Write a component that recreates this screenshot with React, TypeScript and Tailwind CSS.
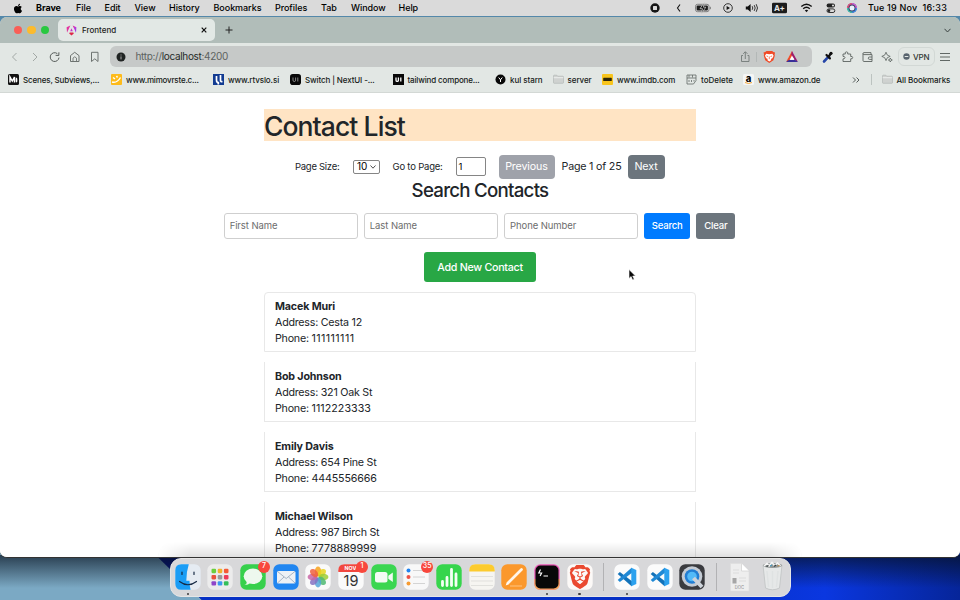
import React from "react";
import { FaApple } from "react-icons/fa";
import { SiBrave } from "react-icons/si";

const menus = [
  { label: "Brave", cls: "w-10 font-bold" },
  { label: "File", cls: "w-[28.5px] font-medium" },
  { label: "Edit", cls: "w-[30px] font-medium" },
  { label: "View", cls: "w-[34.5px] font-medium" },
  { label: "History", cls: "w-[44.5px] font-medium" },
  { label: "Bookmarks", cls: "w-[61.5px] font-medium" },
  { label: "Profiles", cls: "w-[46px] font-medium" },
  { label: "Tab", cls: "w-[30px] font-medium" },
  { label: "Window", cls: "w-[47.5px] font-medium" },
  { label: "Help", cls: "w-8 font-medium" },
];

const contacts = [
  { name: "Macek Muri", address: "Cesta 12", phone: "111111111", digits: "tracking-[0.42px]" },
  { name: "Bob Johnson", address: "321 Oak St", phone: "1112223333", digits: "tracking-[0.05px]" },
  { name: "Emily Davis", address: "654 Pine St", phone: "4445556666", digits: "tracking-[-0.15px]" },
  { name: "Michael Wilson", address: "987 Birch St", phone: "7778889999", digits: "tracking-[0px]" },
];

function MenuBar() {
  return (
    <div className="flex h-4 items-center bg-[#dadada] text-[9px] leading-4 tracking-[-0.05px] text-black">
      <div className="flex w-9 shrink-0 pl-[13px]">
        <FaApple className="h-[11px] w-[10px]" />
      </div>
      {menus.map((m) => (
        <span key={m.label} className={`shrink-0 whitespace-nowrap ${m.cls}`}>{m.label}</span>
      ))}
      <svg className="ml-[212px] h-4 w-[220px] shrink-0" viewBox="643 0 220 16" fill="none">
        <circle cx="655" cy="8" r="4.7" fill="#151515" />
        <rect x="653" y="6" width="4" height="4" rx="0.6" fill="#dadada" />
        <path d="M680 4.5 677.5 8l2.5 3.5" stroke="#111" strokeWidth="1.1" />
        <rect x="695.5" y="4.3" width="13.5" height="7.4" rx="2" stroke="#777" strokeWidth="0.9" />
        <rect x="696.6" y="5.4" width="11.300" height="5.200" rx="1" fill="#1c1c1c" />
        <path d="M704.300 2.500 700 8.700h2.500l-1 4.800 4.300-6.300h-2.500z" fill="#111" stroke="#dadada" strokeWidth="0.7" />
        <path d="M710.3 6.8v2.4" stroke="#777" />
        <circle cx="728" cy="8" r="4.3" stroke="#222" strokeWidth="0.9" />
        <path d="M726.6 5.9v4.2l3.4-2.1z" fill="#111" />
        <path d="M745.8 6.4h2l2.8-2.4v8l-2.8-2.4h-2z" fill="#111" />
        <path d="M752.2 6.2q1.2 1.8 0 3.6M754.2 5.1q2 2.9 0 5.8M756.2 4.2q2.6 3.8 0 7.6" stroke="#222" strokeWidth="0.9" />
        <rect x="772" y="2.7" width="15" height="10.6" rx="1.4" fill="#1c1c1c" />
        <path d="M801.3 6.6q5.2-4.6 10.4 0M803.2 8.7q3.3-2.9 6.6 0" stroke="#111" strokeWidth="1.4" />
        <path d="M806.5 12.2 804.8 10.3q1.7-1.2 3.4 0z" fill="#111" />
        <rect x="826.6" y="3.6" width="8.4" height="3.8" rx="1.9" fill="#222" />
        <circle cx="833" cy="5.5" r="1.1" fill="#dadada" />
        <rect x="827" y="8.9" width="7.8" height="3.6" rx="1.8" stroke="#222" strokeWidth="0.9" />
        <circle cx="828.9" cy="10.7" r="1.4" fill="#222" />
        <circle cx="852" cy="8" r="4.8" fill="#3d3f66" />
        <path d="M847.7 8a4.3 4.3 0 0 1 4.3-4.3" stroke="#e0507e" strokeWidth="1.6" />
        <path d="M852 3.7A4.3 4.3 0 0 1 856.3 8" stroke="#c95fd0" strokeWidth="1.6" />
        <path d="M856.3 8a4.3 4.3 0 0 1-4.3 4.3" stroke="#3c8de8" strokeWidth="1.6" />
        <path d="M852 12.3A4.3 4.3 0 0 1 847.7 8" stroke="#35bfae" strokeWidth="1.6" />
        <circle cx="852" cy="8" r="2.5" fill="#e9f2fb" />
        <text x="779.4" y="11" fontSize="8" fontWeight="700" fill="#e8e8e8" textAnchor="middle">A+</text>
      </svg>
      <span className="ml-[5.5px] shrink-0 whitespace-pre font-medium tracking-[0.2px]">Tue 19 Nov  16:33</span>
    </div>
  );
}

function TabStrip() {
  return (
    <div className="flex h-[26px] shrink-0 items-center bg-[#b1bdb9]">
      <div className="ml-[14px] flex w-[44px] shrink-0 gap-[5px]">
        <i className="size-[8.4px] rounded-full bg-[#f95f57]" />
        <i className="size-[8.4px] rounded-full bg-[#fcbb2d]" />
        <i className="size-[8.4px] rounded-full bg-[#28c840]" />
      </div>
      <div className="flex h-[22px] w-[157px] shrink-0 items-center rounded-[5px] bg-[#e2e8e5] pl-2">
        <svg className="h-[11px] w-[11px]" viewBox="0 0 22 22">
          <defs>
            <linearGradient id="ng" x1="0" y1="0" x2="1" y2="1">
              <stop offset="0" stopColor="#e32d7a" />
              <stop offset="0.5" stopColor="#c038e0" />
              <stop offset="1" stopColor="#7a3cf0" />
            </linearGradient>
          </defs>
          <path d="M13.3 1 20.8 4.6 20 15.6z" fill="url(#ng)" />
          <path d="M8.700 1 1.200 4.600 2 15.600z" fill="#e235a0" />
          <path d="M15.600 17.200 11 20.900 6.400 17.200 7.400 14.800h7.200z" fill="#dd2748" />
          <path d="M11 6.400 13.600 12.500H8.400z" fill="#c832c8" />
        </svg>
        <span className="ml-1 w-[119.5px] pl-[1px] text-[8px] font-medium text-[#1e2321]">Frontend</span>
        <svg className="h-[6px] w-[6px]" viewBox="0 0 6 6"><path d="M.7.7l4.6 4.600M5.300.7.7 5.300" stroke="#111" strokeWidth="1.200" /></svg>
      </div>
      <svg className="ml-[9.500px] h-[8px] w-[8px]" viewBox="0 0 8 8"><path d="M4 .5v7M.5 4h7" stroke="#222" strokeWidth="1" /></svg>
      <svg className="mr-[9px] ml-auto h-[5px] w-[7px]" viewBox="0 0 7 5"><path d="M.5.800 3.500 4 6.500.800" fill="none" stroke="#3c4442" strokeWidth="1" /></svg>
    </div>
  );
}

function AddressBar() {
  return (
    <div className="mt-[2.500px] flex h-[22px] shrink-0 items-center">
      <svg className="h-[22px] w-[110px] shrink-0" viewBox="0 46 110 22" fill="none">
        <path d="m16.500 53-4 4 4 4M33 53l4 4-4 4" stroke="#a2a8a5" />
        <path d="M57.300 53.600A4.400 4.400 0 1 0 59 57.600" stroke="#575d5a" />
        <path d="m58.900 52.300-.1 3.200-3.200-.2" stroke="#575d5a" />
        <path d="M70.500 55.600 74.700 52.300 79 55.600V61.500h-8.500z" stroke="#6d7370" strokeLinejoin="round" />
        <path d="M73 61.300v-3.200q1.700-2.600 3.500 0v3.200" stroke="#6d7370" strokeWidth="0.9" />
        <path d="M91.500 52.300h6.500v9.200l-3.200-2.700-3.300 2.700z" stroke="#6d7370" strokeLinejoin="round" />
      </svg>
      <div className="flex h-[21px] w-[702px] shrink-0 items-center rounded-md bg-[#c6c9c8]">
        <svg className="ml-[6px] h-[10px] w-[10px]" viewBox="0 0 10 10"><circle cx="5" cy="5" r="4.500" fill="#202423" /><path d="M5 2.500v1M5 4.400v3" stroke="#aaa" /></svg>
        <span className="ml-[9.500px] text-[10px] tracking-[-0.320px] text-[#5d6360]">http://<span className="text-[#262b29]">localhost</span>:4200</span>
        <svg className="mr-[10px] ml-auto h-[20px] w-[66px]" viewBox="736 47 66 20" fill="none">
          <path d="M743 55.500h-1.500v6h7.500v-6h-1.500M745.300 59v-7M743.200 53.800l2.100-2.100 2.100 2.100" stroke="#737977" strokeWidth="0.9" />
          <path d="M756.500 52v10" stroke="#afb4b2" strokeWidth="0.800" />
          <path d="M766.500 51h5.600l1.300 1.100 1.700.4-.5 2 .2 1.300-1.400 4.400-4.100 2.900-4.100-2.900-1.400-4.400.2-1.300-.5-2 1.700-.4z" fill="#f04a26" />
          <path d="M766.200 53.800l3.100.5 3.100-.5 1.200 1.900-1.200 2.500-1.700.8.700 1-2.100 1.500-2.100-1.500.7-1-1.700-.8-1.200-2.500z" fill="#fff" />
          <path d="M766.500 56l1.600.5M772.100 56l-1.600.5M769.300 56.500v2.700" stroke="#f04a26" strokeWidth="0.700" />
          <path d="M792 51.500 797.800 62H786.200z" fill="#fff" />
          <path d="M792 51 793.500 56.500 789.300 60.200 786 62z" fill="#f04c28" />
          <path d="M792 51 798 62 794.500 60 791.200 54.500z" fill="#9b1d6e" />
          <path d="M786 62h12l-3-2.300h-6z" fill="#392f98" />
          <path d="M792 55.500 794.300 59.700h-4.600z" fill="#fff" />
        </svg>
      </div>
      <svg className="h-[22px] w-[86px] shrink-0" viewBox="812 46 86 22" fill="none">
        <path d="M824 61.500 829 56.200" stroke="#2546a8" strokeWidth="2.600" strokeLinecap="round" />
        <path d="M826.500 55l3.400 3.400M829 56l1.800-2.200" stroke="#111" strokeWidth="2.200" strokeLinecap="round" />
        <circle cx="831" cy="53.300" r="1.600" fill="#111" />
        <path d="M843 54h2.300q-.7-2.100 1.200-2.100t1.200 2.100h3v2.500q2-.4 2 1.100t-2 1.200v2.700h-7.700v-2.600q2-.1 2-1.300t-2-1.200z" stroke="#5c6360" strokeWidth="0.9" strokeLinejoin="round" />
        <path d="M863 53.600q0-1 1-1h7v2M863 53.600v6.900q0 1 1 1h8v-6.900h-8q-1 0-1-1zM872 57h-2.500q-1.200 0-1.200 1.200t1.200 1.200h2.500" stroke="#5c6360" strokeWidth="0.9" />
        <path d="m886 52.200 1.300 2.900 2.900 1.300-2.900 1.300-1.300 2.900-1.300-2.900-2.900-1.300 2.900-1.300zM890.300 58l.6 1.400 1.400.6-1.400.6-.6 1.400-.6-1.400-1.400-.6 1.400-.6z" stroke="#5c6360" strokeWidth="0.800" />
      </svg>
      <div className="flex h-[19px] w-[37px] shrink-0 items-center rounded-md border border-[#d2d8d5] pl-[4px] text-[8px] font-medium tracking-[-0.100px] text-[#333936]">
        <svg className="mr-[3px] h-[7px] w-[7px]" viewBox="0 0 7 7"><circle cx="3.500" cy="3.500" r="3.200" fill="#59656f" /><path d="M1.700 3.500h3.600" stroke="#e2e7e4" strokeWidth="1.100" /></svg>
        VPN
      </div>
      <svg className="ml-[5px] h-[10px] w-[10px]" viewBox="0 0 10 10"><path d="M0 1.500h10M0 5h10M0 8.500h10" stroke="#525956" strokeWidth="0.9" /></svg>
    </div>
  );
}

function Folder() {
  return (
    <svg className="h-[11px] w-[11px]" viewBox="0 0 11 11"><path d="M.5 2q0-.8.8-.8h2.500l1 1h4.900q.8 0 .8.800v5.500q0 .8-.8.800H1.300q-.8 0-.8-.8z" fill="#cfd2d0" stroke="#adb2b0" strokeWidth="0.600" /><path d="M.7 3.700h9.600" stroke="#eceeed" /></svg>
  );
}

function Bookmarks() {
  const items: { label: string; cls: string; icon: React.ReactNode }[] = [
    { label: "Scenes, Subviews,...", cls: "w-[103px] tracking-[-0.15px]", icon: <svg className="size-[11px]" viewBox="0 0 11 11"><rect width="11" height="11" rx="1.500" fill="#111" /><path d="M2 8.500V3l2.300 4L6.500 3v5.500" fill="none" stroke="#fff" strokeWidth="1.500" /><ellipse cx="8.500" cy="6" rx=".9" ry="2.500" fill="#fff" /></svg> },
    { label: "www.mimovrste.c...", cls: "w-[102px] tracking-[-0.2px]", icon: <svg className="size-[11px]" viewBox="0 0 11 11"><rect width="11" height="11" rx="1" fill="#fdbb1b" /><path d="M1 8q5 1.500 8.500-4.500M2 3.500l2 1.500M5.500 2l1 1.500" fill="none" stroke="#fff" strokeWidth="1.400" /></svg> },
    { label: "www.rtvslo.si", cls: "w-[77px] tracking-[-0.1px]", icon: <svg className="size-[11px]" viewBox="0 0 11 11"><rect width="11" height="11" fill="#123b91" /><path d="M3.500 2v4q0 2.500 1.800 2.500v2M7.500 1v5.500q0 1.500 2 1" fill="none" stroke="#fff" strokeWidth="1.700" /></svg> },
    { label: "Switch | NextUI -...", cls: "w-[102.5px] tracking-[-0.12px]", icon: <svg className="size-[11px]" viewBox="0 0 11 11"><rect width="11" height="11" rx="2.800" fill="#080808" /><path d="M3 3.500v2.700q0 1.300 1.300 1.300t1.300-1.300V3.500M7.800 3.500v4" fill="none" stroke="#bbb" strokeWidth=".7" /></svg> },
    { label: "tailwind compone...", cls: "w-[102.5px] tracking-[-0.15px]", icon: <svg className="size-[11px]" viewBox="0 0 11 11"><rect width="11" height="11" fill="#080808" /><path d="M3 3.500v2.700q0 1.200 1.200 1.200t1.200-1.200V3.500M7.800 3.500v4" fill="none" stroke="#fff" strokeWidth="1.300" /></svg> },
    { label: "kul starn", cls: "w-[57.500px] tracking-[-0.05px]", icon: <svg className="size-[11px]" viewBox="0 0 11 11"><circle cx="5.500" cy="5.500" r="5" fill="#080808" /><path d="M3.700 3.500l1.800 2.300 1.800-2.300M5.500 5.500v2.500" fill="none" stroke="#fff" strokeWidth="1" /></svg> },
    { label: "server", cls: "w-[49.500px] tracking-[-0.05px]", icon: <Folder /> },
    { label: "www.imdb.com", cls: "w-[84px] tracking-[-0.12px]", icon: <svg className="size-[11px]" viewBox="0 0 11 11"><rect width="11" height="11" rx="1" fill="#f8c51c" /><rect x="1.200" y="3.800" width="8.600" height="3.200" rx=".6" fill="#2c2508" /></svg> },
    { label: "toDelete", cls: "w-[57px]", icon: <svg className="size-[11px]" viewBox="0 0 11 11" fill="none" stroke="#626966" strokeWidth=".8"><path d="M1 1h9v5.500l-2.500 3.500H1zM1 4h9M3 1v2.500M6.500 1v2.500M3 6v2M5.500 6v2M8 6v1.500" /></svg> },
    { label: "www.amazon.de", cls: "w-[109px] tracking-[-0.12px]", icon: <svg className="size-[11px]" viewBox="0 0 11 11"><rect width="11" height="11" rx="1.500" fill="#f5f6f5" /><text x="5.500" y="7.600" textAnchor="middle" fontSize="9.500" fontWeight="800">a</text><path d="M2 8.500q3.500 2 7 0" fill="none" stroke="#f6a024" strokeWidth=".9" /></svg> },
  ];
  return (
    <div className="flex h-[24px] items-center text-[8px] font-medium text-[#161a18]">
      <div className="w-[8px] shrink-0" />
      {items.map((b) => (
        <div key={b.label} className={`flex shrink-0 items-center gap-[4px] whitespace-nowrap ${b.cls}`}>
          <span className="shrink-0">{b.icon}</span>
          {b.label}
        </div>
      ))}
      <svg className="h-[8px] w-[8px]" viewBox="0 0 8 8"><path d="M1 1.500 3.500 4 1 6.500M4.500 1.500 7 4 4.500 6.500" fill="none" stroke="#444b48" strokeWidth=".9" /></svg>
      <div className="ml-[11px] h-[11px] w-px bg-[#bcc3c0]" />
      <div className="ml-[9.500px] flex items-center gap-[4px] tracking-[-0.080px] whitespace-nowrap"><Folder />All Bookmarks</div>
    </div>
  );
}

function Field({ label }: { label: string }) {
  return (
    <div className="flex h-[26px] w-[134px] shrink-0 items-center rounded-[3px] border border-[#cfcfcf] pt-px pl-[5px] text-[9.500px] tracking-[-0.080px] text-[#6d6d6d]">{label}</div>
  );
}

function ContactsPage() {
  return (
    <div className="relative flex flex-1 flex-col overflow-hidden border-t border-[#d3d8d5] bg-white text-[#212529]">
      <div className="mx-auto mt-[16.500px] flex h-8 w-[432px] shrink-0 items-center bg-[#ffe4c4] pt-px">
        <h1 className="text-[26.500px] leading-8 font-medium tracking-[-0.920px]">Contact List</h1>
      </div>
      <div className="mt-[13px] ml-[295px] flex h-[25px] shrink-0 items-center whitespace-nowrap text-[9.500px]">
        <span className="w-[58px] pt-px tracking-[-0.280px]">Page Size:</span>
        <div className="flex h-[14px] w-[26.500px] items-center justify-between rounded-[2px] border border-[#858585] px-[3px] text-[10px] text-black">
          10
          <svg className="h-[4px] w-[6px]" viewBox="0 0 6 4"><path d="M.5.500 3 3.200 5.500.500" fill="none" stroke="#222" strokeWidth=".8" /></svg>
        </div>
        <span className="ml-[13px] w-[63px] pt-px tracking-[-0.200px]">Go to Page:</span>
        <div className="flex h-[18.500px] w-[30px] items-center rounded-[2px] border border-[#858585] pt-px pl-[2px] text-black">1</div>
        <div className="ml-[13px] flex h-6 w-[56px] items-center justify-center rounded-[4px] bg-[#9fa2aa] pt-[2px] text-[10.700px] tracking-[-0.120px] text-white">Previous</div>
        <span className="w-[73px] pt-[2px] pl-[7px] text-[10.700px] tracking-[-0.200px]">Page 1 of 25</span>
        <div className="flex h-6 w-[37px] items-center justify-center rounded-[4px] bg-[#6c757d] pt-[2px] text-[10.700px] tracking-[-0.100px] text-white">Next</div>
      </div>
      <h2 className="shrink-0 text-center text-[18.700px] leading-[23px] font-medium tracking-[-0.750px]">Search Contacts</h2>
      <div className="mt-[11px] mr-px flex shrink-0 justify-center gap-[6.200px]">
        <Field label="First Name" />
        <Field label="Last Name" />
        <Field label="Phone Number" />
        <div className="flex h-[26px] w-[46px] items-center justify-center rounded-[3px] bg-[#007bff] pt-px text-[9.500px] font-medium tracking-[-0.200px] text-white">Search</div>
        <div className="flex h-[26px] w-[39px] items-center justify-center rounded-[3px] bg-[#6c757d] pt-px text-[9.500px] font-medium tracking-[-0.150px] text-white">Clear</div>
      </div>
      <div className="mx-auto mt-[13px] flex h-[30px] w-[112px] shrink-0 items-center justify-center rounded-[3px] bg-[#28a745] pt-[2px] text-[10.700px] font-medium tracking-[-0.280px] whitespace-nowrap text-white">Add New Contact</div>
      <div className="mx-auto mt-[10px] flex w-[432px] shrink-0 flex-col gap-[10px]">
        {contacts.map((c, i) => (
          <div
            key={c.name}
            className={`h-[60px] border border-[#e8e8e8] pl-[10px] text-[10.700px] leading-4 tracking-[-0.240px] ${i === 0 ? "rounded-t-[4px] pt-[6px]" : "border-t-0 pt-[7px]"}`}
          >
            <div className="font-bold tracking-[-0.150px]">{c.name}</div>
            <div>Address: {c.address}</div>
            <div>Phone: <span className={c.digits}>{c.phone}</span></div>
          </div>
        ))}
      </div>
      <div className="absolute bottom-0 left-[158px] h-[15px] w-[644px] rounded-t-[20px] bg-linear-to-t from-black/12 to-transparent mask-x-from-95%" />
    </div>
  );
}

function Tile({ fill, children, dot, badge }: { fill: string; children?: React.ReactNode; dot?: boolean; badge?: string }) {
  return (
    <div className="relative flex h-full w-[32.650px] shrink-0 flex-col items-center pt-[5px]">
      <svg className="h-[26px] w-[26px] shrink-0" viewBox="0 0 26 26" fill="none">
        <rect x=".3" y=".3" width="25.400" height="25.400" rx="6" fill={fill} />
        {children}
      </svg>
      {dot && <i className="mt-[2.500px] size-[2.500px] rounded-full bg-[#3b3b3b]" />}
      {badge && (
        <b className="absolute top-[1.500px] right-[-0.500px] flex size-[12px] items-center justify-center rounded-full bg-[#f8473c] text-[7px] font-medium text-white">{badge}</b>
      )}
    </div>
  );
}

function Code() {
  return (
    <>
      <path d="M3.700 9.900 5.900 8.100 18 17.300v4.900L17.300 22z" fill="#1272b9" />
      <path d="M3.700 16.100 5.900 17.900 18 8.700V3.800L17.300 4z" fill="#2089d5" />
      <path d="M17.300 3.700 22.300 6v14l-5 2.300z" fill="#2ca1ee" />
    </>
  );
}

function Dock() {
  const petals = ["#f7a11b", "#e8d51e", "#9dcc35", "#4fb972", "#55a5d8", "#8471c2", "#c866a6", "#f0603f"];
  const grid = ["#6bcf3c", "#f3b12d", "#f45b37", "#e9513c", "#9a9a9a", "#ee3c5a", "#8f46c9", "#3c98ef", "#34bf5a"];
  return (
    <div className="mx-auto flex h-[39px] w-[621px] rounded-[11px] border border-[#e6e6e6] bg-[#d8d8da] pl-[1px]">
      <Tile fill="#e5ebf2" dot>
        <path d="M13.800.3H6.300q-6 0-6 6v13.400q0 6 6 6h9.300q-1-3.700-1.100-9h-3.200Q11.300 8 13.800.3z" fill="#1b9df5" />
        <path d="M7 8v2.500M19 8v2.500M4.500 17.500q8.500 6.500 17 0" stroke="#172a44" strokeWidth="1.200" strokeLinecap="round" />
      </Tile>
      <Tile fill="#ececec">
        {grid.map((c, i) => <rect key={i} x={4.5 + (i % 3) * 6.2} y={4.800 + Math.floor(i / 3) * 6.2} width="4.600" height="4.400" rx="1.100" fill={c} />)}
      </Tile>
      <Tile fill="#37d04c" badge="7">
        <ellipse cx="13" cy="12.300" rx="9.300" ry="7.800" fill="#eef8ee" />
        <path d="M7 17q0 3-2.500 4 4 0 6-2.500z" fill="#eef8ee" />
      </Tile>
      <Tile fill="#2186f0">
        <rect x="4" y="7" width="18.500" height="12.500" rx="1.500" fill="#eef1f5" />
        <path d="m4.500 7.500 8.700 7 8.700-7M4.500 19l6.500-6M22 19l-6.500-6" stroke="#93a3b5" strokeWidth=".8" />
      </Tile>
      <Tile fill="#fafafa">
        {petals.map((c, i) => <ellipse key={c} cx="13" cy="7.500" rx="3.200" ry="4.900" fill={c} fillOpacity=".85" transform={`rotate(${i * 45} 13 13)`} />)}
      </Tile>
      <Tile fill="#fafafa" badge="1">
        <path d="M.3 8V6.300q0-6 6-6h13.400q6 0 6 6V8z" fill="#f1473f" />
        <text x="12.500" y="6.400" fontSize="5.300" fontWeight="700" fill="#fff" textAnchor="middle">NOV</text>
        <text x="13" y="21.500" fontSize="14.500" fill="#333" textAnchor="middle">19</text>
      </Tile>
      <Tile fill="#3bd651">
        <rect x="4" y="8" width="12.500" height="10.500" rx="2.500" fill="#f4faf4" />
        <path d="m17.300 11.800 4.500-3.300v9.500l-4.500-3.300z" fill="#f4faf4" />
      </Tile>
      <Tile fill="#f8f8f8" badge="35">
        <circle cx="5.500" cy="6.500" r="2" fill="#2283ef" /><circle cx="5.500" cy="13" r="2" fill="#ee5145" /><circle cx="5.500" cy="19.500" r="2" fill="#f69b32" />
        <path d="M10 6.500h12M10 13h12M10 19.500h12" stroke="#cfcfcf" strokeWidth=".9" />
      </Tile>
      <Tile fill="#36d54c">
        <path d="M6.500 17.500v4M11 13.500v8M15.500 5.500v16M20 10v11.500" stroke="#f4fff4" strokeWidth="2.800" strokeLinecap="round" />
      </Tile>
      <Tile fill="#f6f5f1">
        <path d="M.3 7.500V6.300q0-6 6-6h13.400q6 0 6 6v1.200z" fill="#fccb2e" />
        <path d="M2 12.500h22M2 17h22M2 21.500h22" stroke="#d9d8d4" strokeWidth=".7" />
      </Tile>
      <Tile fill="#fb982c">
        <path d="M7 19 20.500 5.500" stroke="#fff5e8" strokeWidth="2.700" strokeLinecap="round" />
        <path d="m4.700 21.500 1.200-3 1.800 1.700z" fill="#fff" /><path d="M9 22h12" stroke="#ffc98b" strokeWidth=".9" />
      </Tile>
      <Tile fill="#e957b4" dot>
        <path d="M.3 15v4.700q0 6 6 6h13.400q6 0 6-6V15z" fill="#f6a45b" />
        <rect x="1.500" y="1.500" width="23" height="23" rx="4.900" fill="#080808" />
        <path d="m6.500 5.500-1.700 3.500H7.600L6.100 12M9.500 12h4.500" stroke="#fff" strokeWidth="1.200" />
      </Tile>
      <Tile fill="#fcf9f7" dot><SiBrave x="1" y="1" size={24} color="#ea4930" /></Tile>
      <div className="mx-[7px] mt-[4px] h-[28px] w-px shrink-0 bg-[#b2b2b4]" />
      <Tile fill="#fbfbfb" dot><Code /></Tile>
      <Tile fill="#fbfbfb"><Code /></Tile>
      <Tile fill="#3a3b3f">
        <circle cx="13" cy="12.500" r="10.300" fill="#c4cbd4" />
        <circle cx="13" cy="12.500" r="7.300" fill="#237ed3" />
        <circle cx="13" cy="12.500" r="4.800" fill="#53baf8" />
        <path d="m14.500 14 8.500 9" stroke="#cdd3da" strokeWidth="4" />
      </Tile>
      <div className="mr-[7px] ml-[7.500px] mt-[4px] h-[28px] w-px shrink-0 bg-[#b2b2b4]" />
      <svg className="mt-[2px] h-[32px] w-[32px] shrink-0" viewBox="0 0 32 32" fill="none">
        <path d="M6.500 2.500h11l7.500 7.500v20H6.500z" fill="#eeeeee" stroke="#dddddd" strokeWidth=".6" />
        <path d="M17.500 2.500V10H25" fill="#fff" stroke="#cfcfcf" strokeWidth=".7" />
        <path d="M9 9h6M9 12h6M15 17h7M15 20h7" stroke="#dcdcdc" /><rect x="8.500" y="17" width="4" height="5.500" fill="#a6a6a6" />
        <text x="15.500" y="28" fontSize="4.200" fill="#888" textAnchor="middle">DOC</text>
      </svg>
      <svg className="mt-[2px] h-[32px] w-[34px] shrink-0" viewBox="1 0 34 32" fill="none">
        <path d="M8 4h19l-2.500 23q-7 3.500-14 0z" fill="#e6e8e8" stroke="#bfc3c3" strokeWidth=".8" />
        <path d="m12 10 1.500 16M17.500 10v17M23 10l-1.500 16" stroke="#dfe2e2" strokeWidth="1.500" />
        <ellipse cx="17.500" cy="4.500" rx="9.500" ry="2.600" fill="#929797" />
        <path d="m9 5 3-2.500 2 2.500 3-3.500 2.500 3 3-2.500 3 3" stroke="#f6f6f6" strokeWidth="1.600" />
        <path d="m11.500 5.500 2-1M19 5.500l2-1.500" stroke="#353e3f" strokeWidth="1.300" /><path d="m15 5 2-1" stroke="#3699c2" /><path d="m22.500 5 2-.5" stroke="#c28a3d" />
      </svg>
    </div>
  );
}

export default function App() {
  return (
    <div className="relative isolate h-[600px] w-[960px] overflow-hidden bg-[#5488aa] font-['Inter',sans-serif]">
      <svg className="absolute inset-0 -z-10 h-full w-full" viewBox="0 0 960 600">
        <defs>
          <linearGradient id="right" x1="0" x2="1" y1="0" y2="0"><stop offset="0" stopColor="#0630c5" /><stop offset=".5" stopColor="#0a37e0" /><stop offset="1" stopColor="#062599" /></linearGradient>
          <linearGradient id="shade" x1="0" x2="0" y1="0" y2="1"><stop offset="0" stopColor="#06101e" stopOpacity=".7" /><stop offset="1" stopColor="#06101e" stopOpacity="0" /></linearGradient>
        </defs>
        <path d="M0 540h960v60H0z" fill="#7ba9c4" />
        <path d="M140 540h820v60H202z" fill="#061583" />
        <path d="M198 596h762v4H202z" fill="#0630c5" />
        <path d="M690 545h270v55H690z" fill="url(#right)" />
        <path d="M0 555h960v33H0z" fill="url(#shade)" />
      </svg>
      <MenuBar />
      <div className="mt-px flex h-[541px] flex-col overflow-hidden rounded-[7px] border-b border-[#333333] bg-[#e2e7e4]">
        <TabStrip />
        <AddressBar />
        <Bookmarks />
        <ContactsPage />
      </div>
      <Dock />
      <svg className="absolute top-[269px] left-[628px] h-[12px] w-[8px]" viewBox="0 0 8 12"><path d="M1 .5v9l2.100-2 1.500 3.500 1.600-.7-1.500-3.300h2.800z" fill="#080808" stroke="#fff" strokeWidth=".6" /></svg>
    </div>
  );
}
